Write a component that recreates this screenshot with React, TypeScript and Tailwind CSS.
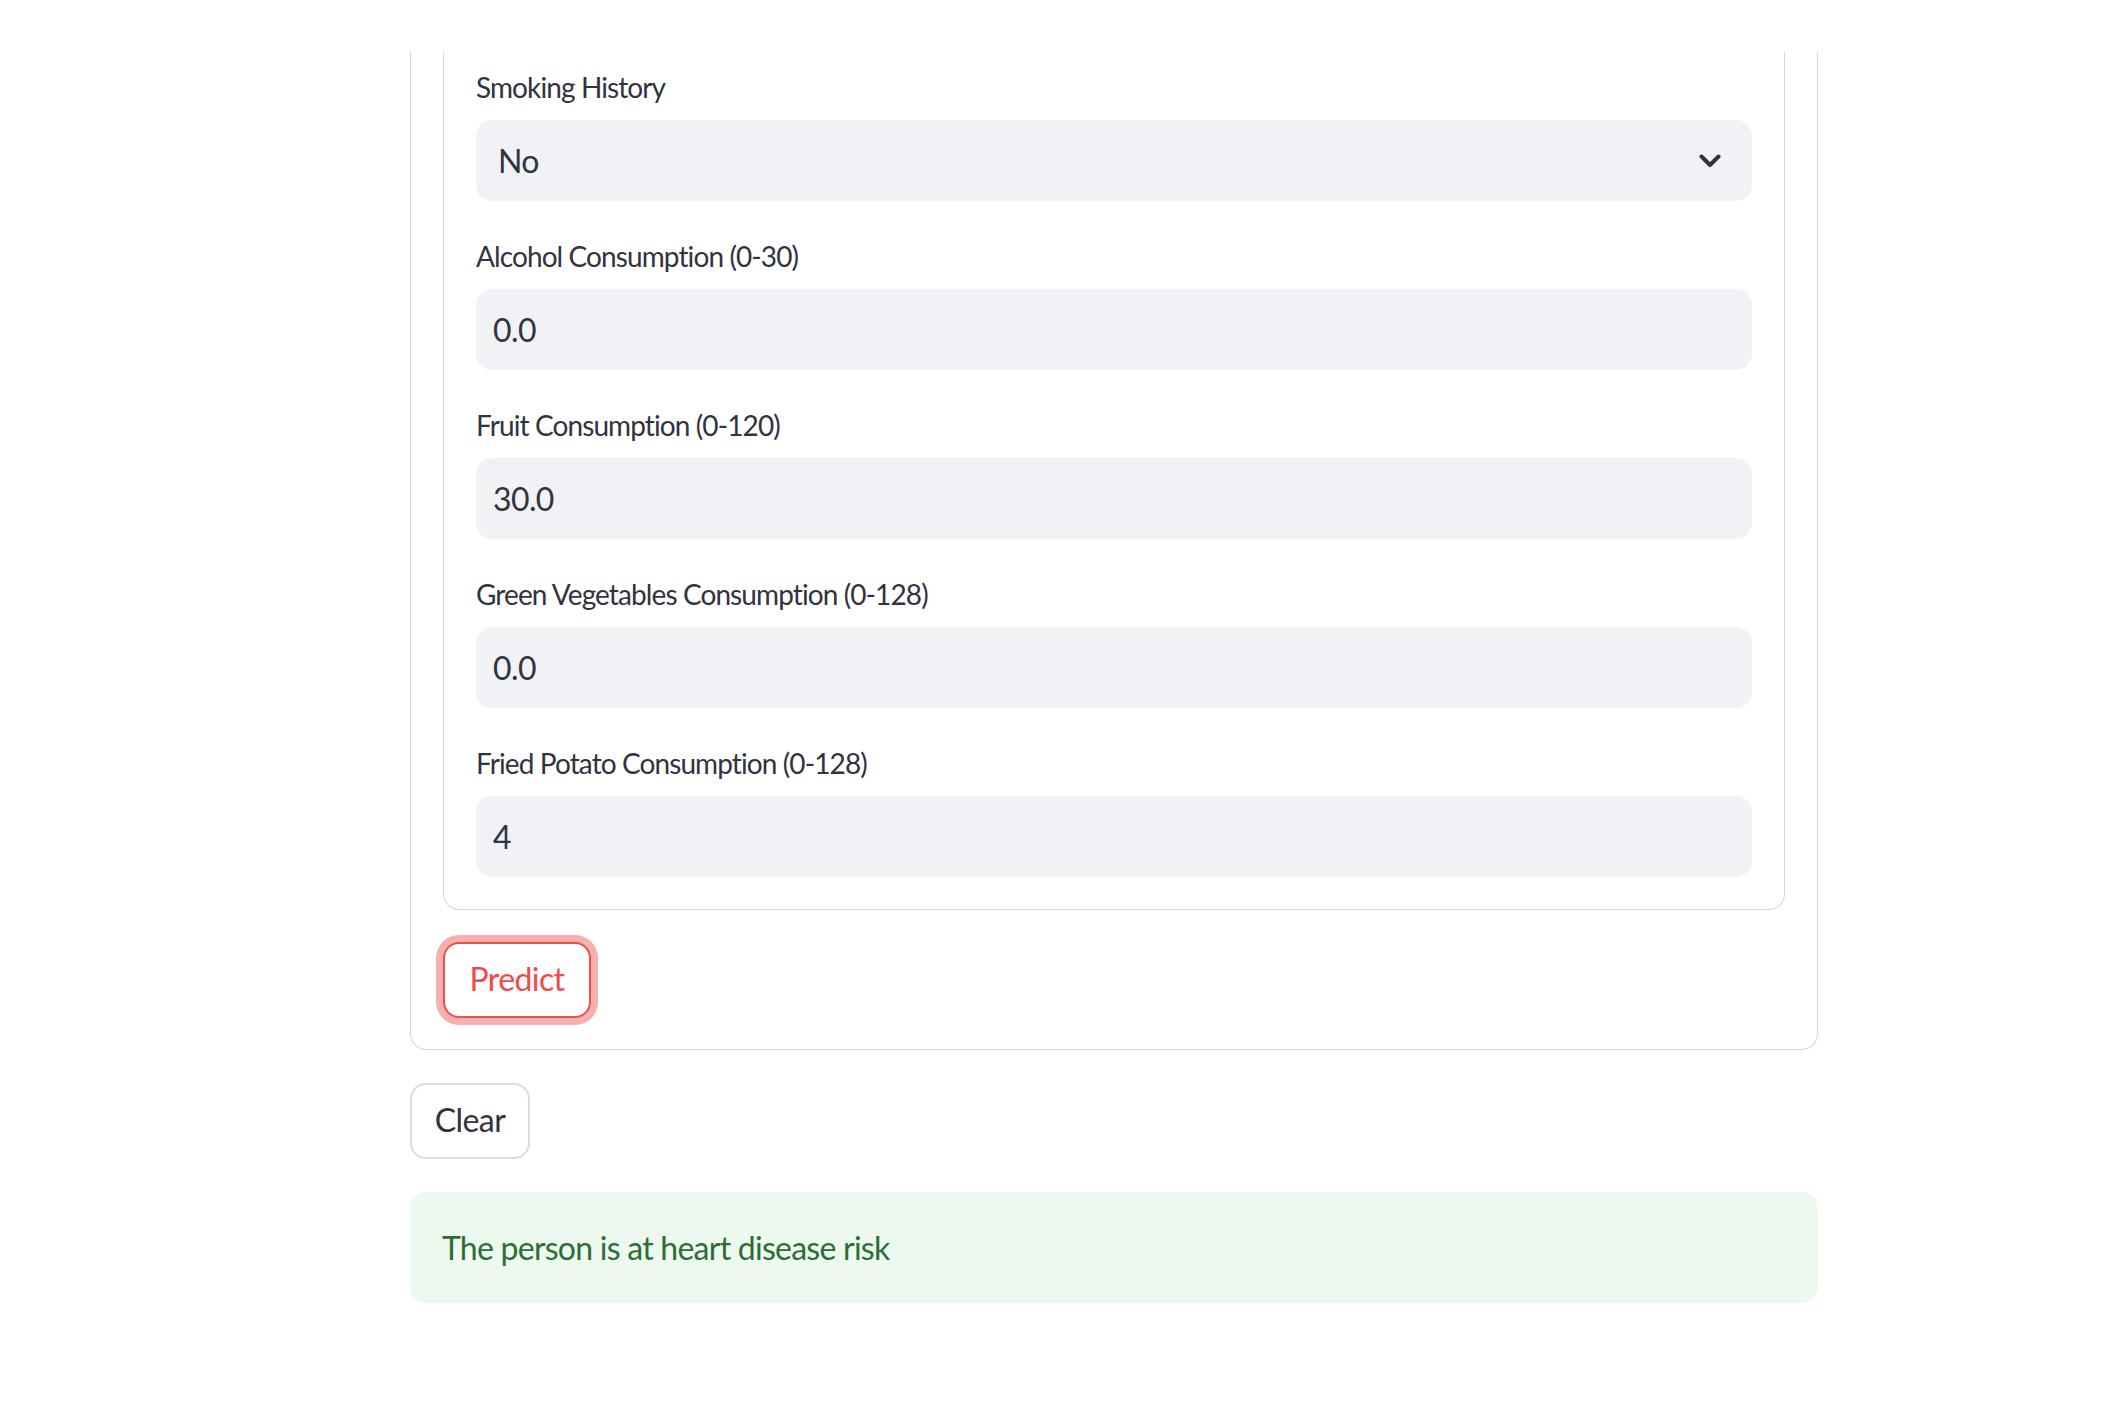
import React from 'react';

interface Field {
  label: string;
  value: string;
  select?: boolean;
}

const fields: Field[] = [
  { label: 'Smoking History', value: 'No', select: true },
  { label: 'Alcohol Consumption (0-30)', value: '0.0' },
  { label: 'Fruit Consumption (0-120)', value: '30.0' },
  { label: 'Green Vegetables Consumption (0-128)', value: '0.0' },
  { label: 'Fried Potato Consumption (0-128)', value: '4' },
];

const ChevronDown: React.FC = () => (
  <svg width="22" height="14" viewBox="0 0 22 14" fill="none">
    <path d="M2.5 2.5 L11 11 L19.5 2.5" stroke="#31333F" strokeWidth="4" strokeLinecap="round" strokeLinejoin="round" />
  </svg>
);

const FormField: React.FC<{ field: Field }> = ({ field }) => (
  <div className="flex flex-col">
    <label className="h-[38px] mb-[14px] flex items-center text-[28px] tracking-[-0.9px] text-[#31333F]">{field.label}</label>
    {field.select ? (
      <div className="h-[81px] rounded-[16px] bg-[#f0f2f6] flex items-center justify-between pl-[22px] pr-[31px]">
        <span className="text-[32px] tracking-[-0.6px] text-[#31333F]">{field.value}</span>
        <ChevronDown />
      </div>
    ) : (
      <div className="h-[81px] rounded-[16px] bg-[#f0f2f6] flex items-center pl-[17px]">
        <span className="text-[32px] tracking-[-0.6px] text-[#31333F]">{field.value}</span>
      </div>
    )}
  </div>
);

const App: React.FC = () => {
  return (
    <div className="min-h-screen bg-white font-['Lato','Liberation_Sans',sans-serif]">
      <div className="h-[52px]" />
      <div className="ml-[410px] w-[1408px]">
        <div className="border border-t-0 border-[#d6d6d9] rounded-b-[16px] px-[32px] pb-[31px]">
          <div className="border border-t-0 border-[#d6d6d9] rounded-b-[16px] px-[32px] pt-[16px] pb-[32px]">
            <div className="flex flex-col gap-[36px]">
              {fields.map((f) => (
                <FormField key={f.label} field={f} />
              ))}
            </div>
          </div>
          <div className="mt-[32px]">
            <button className="w-[148px] h-[76px] rounded-[16px] border-2 border-[#ee4e4e] ring-[7px] ring-[#f8b0ae] bg-white text-[32px] tracking-[-0.6px] text-[#ef4b4b] flex items-center justify-center pb-[2px]">
              Predict
            </button>
          </div>
        </div>
        <div className="mt-[33px]">
          <button className="w-[120px] h-[76px] rounded-[16px] border-2 border-[#dcdce0] bg-white text-[32px] tracking-[-0.6px] text-[#31333F] flex items-center justify-center pb-[2px]">
            Clear
          </button>
        </div>
        <div className="mt-[33px] h-[111px] rounded-[16px] bg-[#edf8ef] flex items-center px-[32px]">
          <span className="text-[32px] tracking-[-0.75px] text-[#2b6e35]">The person is at heart disease risk</span>
        </div>
      </div>
    </div>
  );
};

export default App;
